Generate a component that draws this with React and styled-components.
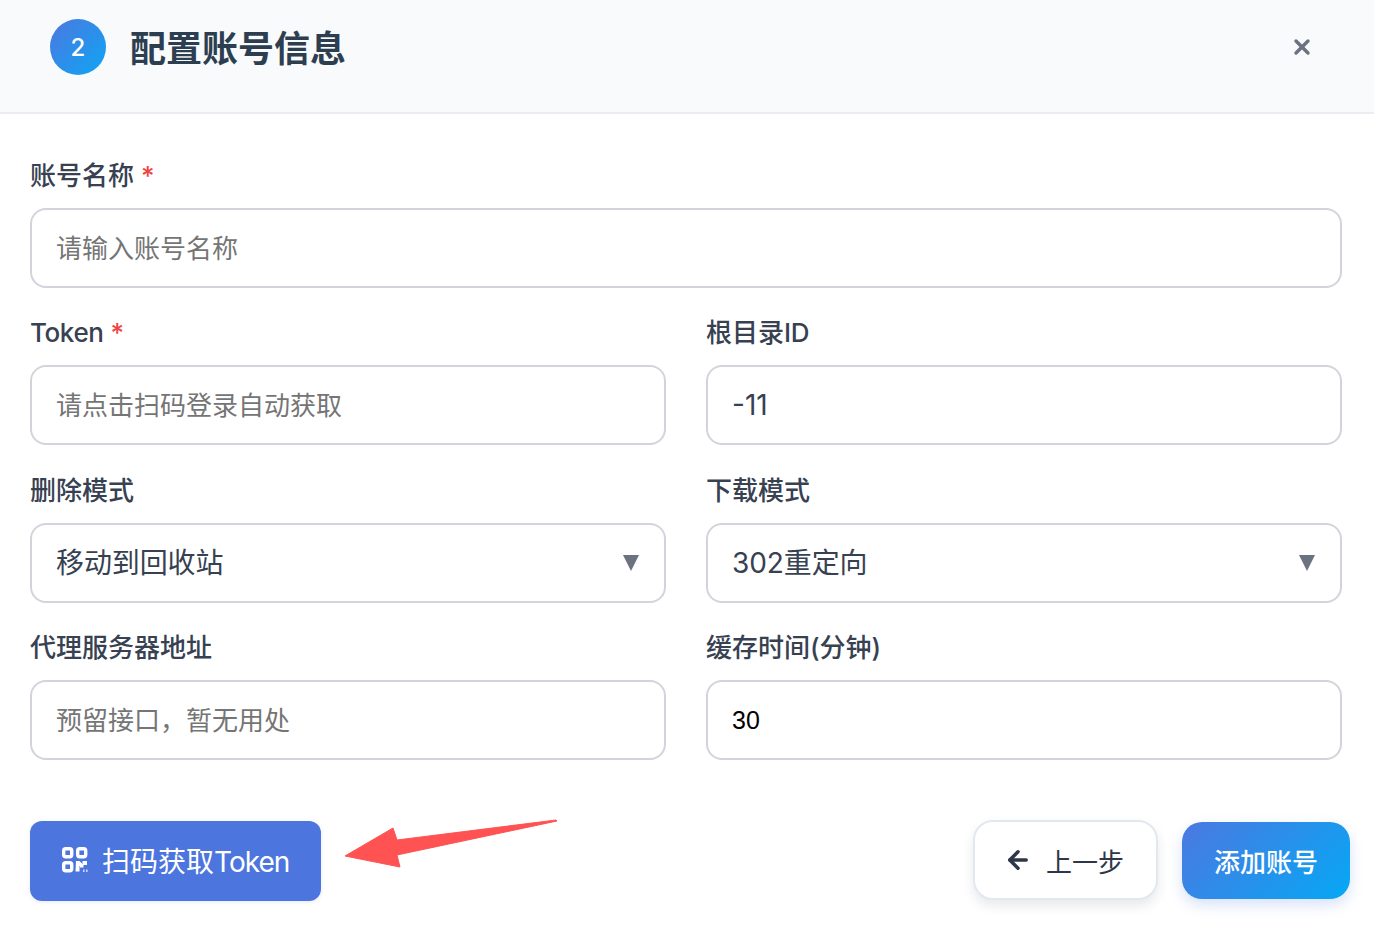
import React from 'react'
import styled, { createGlobalStyle } from 'styled-components'
import { ArrowLeft, X } from 'lucide-react'

const fontStack = `Inter, "Noto Sans CJK SC", "Noto Sans", sans-serif`

const GlobalStyle = createGlobalStyle`
    * { box-sizing: border-box; }
    html, body {
        margin: 0;
        background: #fff;
        font-family: ${fontStack};
    }
    input, select, button { font-family: ${fontStack}; }
`

const Page = styled.div`
    position: relative;
    width: 1374px;
    height: 928px;
    overflow: hidden;
    background: #fff;
`

const Header = styled.header`
    display: flex;
    align-items: flex-start;
    justify-content: space-between;
    height: 114px;
    padding: 19px 60px 0 50px;
    background: #f8fafc;
    border-bottom: 2px solid #e9ecf0;
`

const HeaderLeft = styled.div`
    display: flex;
    align-items: flex-start;
    gap: 24px;
`

const StepBadge = styled.div`
    display: flex;
    align-items: center;
    justify-content: center;
    width: 56px;
    height: 56px;
    border-radius: 50%;
    background: linear-gradient(135deg, #4c78e0, #0ea5f3);
    color: #fff;
    font-size: 24px;
    font-weight: 500;
`

const Title = styled.h2`
    margin: 0;
    padding-top: 2px;
    font-size: 36px;
    font-weight: 600;
    line-height: 56px;
    color: #2d3e50;
`

const CloseButton = styled.button`
    display: flex;
    padding: 0;
    margin-top: 16px;
    border: none;
    background: none;
    color: #6b7280;
`

const Form = styled.form`
    display: flex;
    flex-direction: column;
    gap: 26.4px;
    padding: 43px 32px 0 30px;
`

const Row = styled.div`
    display: grid;
    grid-template-columns: ${props => (props.$single ? '1fr' : '1fr 1fr')};
    column-gap: 40px;
`

const Field = styled.div`
    display: flex;
    flex-direction: column;
    gap: 13px;
`

const Label = styled.label`
    display: block;
    height: 38px;
    font-size: 26px;
    font-weight: 500;
    line-height: 38px;
    color: #374151;
`

const Latin = styled.span`
    letter-spacing: ${props => props.$spacing || '-0.4px'};
`

const Required = styled.span`
    margin-left: 7px;
    color: #ef4444;
`

const Input = styled.input`
    width: 100%;
    height: 80px;
    padding: 0 24px;
    border: 2px solid #d1d5db;
    border-radius: 16px;
    background: #fff;
    font-family: ${props => (props.$plain ? '"Liberation Sans", sans-serif' : fontStack)};
    font-size: ${props => (props.$plain ? '25px' : '28px')};
    color: ${props => (props.$plain ? '#000' : '#374151')};
    outline: none;

    &::placeholder {
        font-size: 26px;
        color: #757575;
        opacity: 1;
    }
`

const SelectWrap = styled.div`
    position: relative;
`

const Select = styled.select`
    width: 100%;
    height: 80px;
    padding: 0 24px;
    border: 2px solid #d1d5db;
    border-radius: 16px;
    background: #fff;
    font-size: 28px;
    letter-spacing: -0.1px;
    color: #374151;
    appearance: none;
    outline: none;
`

const Caret = styled.svg`
    position: absolute;
    top: 32px;
    right: 27px;
    width: 16px;
    height: 16px;
    fill: #6b7280;
    pointer-events: none;
`

const Footer = styled.div`
    display: flex;
    align-items: flex-start;
    justify-content: space-between;
    padding: 60px 24px 0 30px;
`

const ScanButton = styled.button`
    display: flex;
    align-items: center;
    gap: 14px;
    height: 80px;
    margin-top: 1px;
    padding: 0 32px 2px;
    border: none;
    border-radius: 12px;
    background: #4c75de;
    color: #fff;
    font-size: 28px;
    box-shadow: 0 1px 4px rgba(76, 117, 222, 0.15);
`

const Actions = styled.div`
    display: flex;
    align-items: center;
    gap: 24px;
`

const BackButton = styled.button`
    display: flex;
    align-items: center;
    gap: 14px;
    height: 80px;
    padding: 0 32px 0 29px;
    border: 2px solid #e2e8f0;
    border-radius: 20px;
    background: #fff;
    color: #2d3748;
    font-size: 26px;
    box-shadow: 0 6px 12px rgba(30, 41, 59, 0.1);
`

const SubmitButton = styled.button`
    height: 77px;
    padding: 0 32px;
    border: none;
    border-radius: 20px;
    background: linear-gradient(135deg, #4c78e0, #05a8f5);
    color: #fff;
    font-size: 26px;
    font-weight: 500;
    box-shadow: 0 6px 14px rgba(76, 120, 224, 0.22);
`

const Pointer = styled.svg`
    position: absolute;
    top: 810px;
    left: 335px;
    width: 230px;
    height: 70px;
`

const QrIcon = () => (
    <svg width="26" height="26" viewBox="0 0 26 26" fill="none">
        <g stroke="#fff" strokeWidth="3.4">
            <rect x="1.7" y="1.7" width="8" height="8" rx="2" />
            <rect x="15.7" y="1.7" width="8" height="8" rx="2" />
            <rect x="1.7" y="15.7" width="8" height="8" rx="2" />
        </g>
        <path
            d="M14 14h3.5l3 3v-3h4.5v4h-3.5v2.5h-3.5v-1.5h-0.5v5.5h-4z"
            fill="#fff"
        />
        <rect x="21" y="22.5" width="1.6" height="2.5" fill="#fff" opacity="0.7" />
        <rect x="24" y="22.5" width="1.6" height="2.5" fill="#fff" opacity="0.7" />
    </svg>
)

const App = () => {
    return (
        <Page>
            <GlobalStyle />
            <Header>
                <HeaderLeft>
                    <StepBadge>2</StepBadge>
                    <Title>配置账号信息</Title>
                </HeaderLeft>
                <CloseButton type="button" aria-label="关闭">
                    <X size={24} strokeWidth={3.4} />
                </CloseButton>
            </Header>
            <Form>
                <Row $single>
                    <Field>
                        <Label>账号名称<Required>*</Required></Label>
                        <Input placeholder="请输入账号名称" />
                    </Field>
                </Row>
                <Row>
                    <Field>
                        <Label><Latin>Token</Latin><Required>*</Required></Label>
                        <Input placeholder="请点击扫码登录自动获取" />
                    </Field>
                    <Field>
                        <Label>根目录<Latin>ID</Latin></Label>
                        <Input defaultValue="-11" />
                    </Field>
                </Row>
                <Row>
                    <Field>
                        <Label>删除模式</Label>
                        <SelectWrap>
                            <Select defaultValue="recycle">
                                <option value="recycle">移动到回收站</option>
                            </Select>
                            <Caret viewBox="0 0 16 16"><path d="M0 0h16L8 16z" /></Caret>
                        </SelectWrap>
                    </Field>
                    <Field>
                        <Label>下载模式</Label>
                        <SelectWrap>
                            <Select defaultValue="302">
                                <option value="302">302重定向</option>
                            </Select>
                            <Caret viewBox="0 0 16 16"><path d="M0 0h16L8 16z" /></Caret>
                        </SelectWrap>
                    </Field>
                </Row>
                <Row>
                    <Field>
                        <Label>代理服务器地址</Label>
                        <Input placeholder="预留接口，暂无用处" />
                    </Field>
                    <Field>
                        <Label>缓存时间(分钟)</Label>
                        <Input $plain defaultValue="30" />
                    </Field>
                </Row>
            </Form>
            <Footer>
                <ScanButton type="button">
                    <QrIcon />
                    <span>扫码获取<Latin $spacing="-1px">Token</Latin></span>
                </ScanButton>
                <Actions>
                    <BackButton type="button">
                        <ArrowLeft size={28} strokeWidth={3} />
                        上一步
                    </BackButton>
                    <SubmitButton type="button">添加账号</SubmitButton>
                </Actions>
            </Footer>
            <Pointer viewBox="0 0 230 70">
                <path d="M10 46 L58 18 L62 30 L221 10 L222 11 L62 45 L65 57 Z" fill="#ff5252" stroke="#ff5252" strokeWidth="1" strokeLinejoin="round" />
            </Pointer>
        </Page>
    )
}

export default App
